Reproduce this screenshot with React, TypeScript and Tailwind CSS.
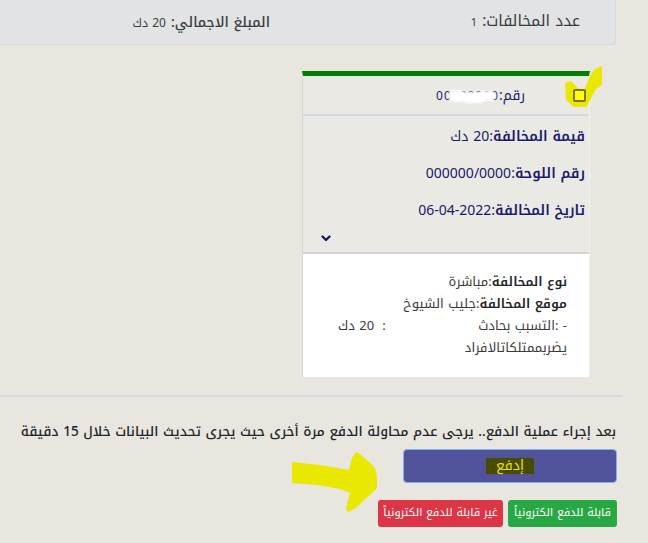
import React from "react";

const F = "font-['Noto_Kufi_Arabic','Noto_Sans_Arabic','DejaVu_Sans',sans-serif]";

function ChevronDown() {
  return (
    <svg width="10" height="7" viewBox="0 0 10 7">
      <path d="M1.5 1.5 L5 5 L8.5 1.5" fill="none" stroke="#1a1a6c" strokeWidth="2.4" strokeLinecap="round" strokeLinejoin="round" />
    </svg>
  );
}

export default function App() {
  return (
    <div dir="rtl" className={`${F} relative w-[648px] h-[543px] overflow-hidden bg-[#e9e6df]`}>
      {/* summary panel */}
      <div className="mr-[32px] w-[616px] h-[45px] bg-[#e2e3e5] border-r border-b border-[#d6d8db] rounded-br-[4px] flex items-center pr-[35px] text-[#383d41]">
        <div className="w-[310px] flex items-baseline">
          <span className="text-[15.5px]">عدد المخالفات:</span>
          <span className="text-[11px] mr-[5px]">1</span>
        </div>
        <div className="flex items-baseline">
          <span className="text-[14px] font-medium">المبلغ الاجمالي:</span>
          <span className="text-[12px] mr-[5px]">20 دك</span>
        </div>
      </div>

      {/* card */}
      <div className="mt-[26px] mr-[58px] w-[288px] border-t-[5px] border-t-[#008000] border-l border-l-[#d9d7d0] border-r border-r-[#f2f1ee] bg-[#ebe9e4]">
        <div className="h-[40px] flex items-center pr-[3px] border-b-2 border-[#d5dae2]">
          <span className="relative z-10 block w-[13px] h-[13px] rounded-[2px] bg-[#ffff00] border-2 border-[#7a7a10]"></span>
          <span className="mr-[48px] flex items-baseline text-[14px] text-[#1a1a6c]">
            <span>رقم:</span>
            <span className="relative text-[12px] tracking-[1px]" dir="ltr">
              00000000
              <span className="absolute left-[12px] top-[3px] w-[18px] h-[12px] rounded-full bg-white blur-[1px]"></span>
              <span className="absolute left-[26px] top-[5px] w-[22px] h-[11px] rounded-full bg-white blur-[1px]"></span>
              <span className="absolute left-[42px] top-[4px] w-[18px] h-[10px] rounded-full bg-white blur-[1px]"></span>
            </span>
          </span>
        </div>
        <div className="pt-[2px] pr-[4px] text-[14px] text-[#1a1a6c]">
          <div className="h-[37px] flex items-center">
            <span className="font-semibold">قيمة المخالفة</span>
            <span>:</span>
            <span className="text-[14px]">20 دك</span>
          </div>
          <div className="h-[37px] flex items-center">
            <span className="font-semibold">رقم اللوحة</span>
            <span>:</span>
            <span className="text-[14px]">000000/0000</span>
          </div>
          <div className="h-[37px] flex items-center">
            <span className="font-semibold">تاريخ المخالفة</span>
            <span>:</span>
            <span className="text-[14px]">06-04-2022</span>
          </div>
          <div className="h-[16px] flex items-center justify-end pl-[18px] pt-[3px]">
            <ChevronDown />
          </div>
          <div className="h-[7px]"></div>
        </div>
        <div className="border-t-2 border-[#d4d4d2] bg-white pt-[17px] pb-[18px] pr-[22px] pl-[35px] text-[13px] leading-[22px] text-[#3a3a3a]">
          <div>
            <span className="font-semibold text-[#212529]">نوع المخالفة</span>
            <span>:مباشرة</span>
          </div>
          <div>
            <span className="font-semibold text-[#212529]">موقع المخالفة</span>
            <span>:جليب الشيوخ</span>
          </div>
          <div className="flex justify-between">
            <span>- :التسبب بحادث</span>
            <span className="flex gap-[8px]">
              <span>:</span>
              <span>20 دك</span>
            </span>
          </div>
          <div>يضربممتلكاتالافراد</div>
        </div>
      </div>

      {/* divider */}
      <div className="mt-[18px] mr-[26px] w-[622px] h-[2px] bg-[#d6dae2]"></div>

      {/* warning */}
      <div className="mt-[23px] mr-[32px] text-[13.5px] leading-[24px] font-medium text-[#212529] whitespace-nowrap">
        بعد إجراء عملية الدفع.. يرجى عدم محاولة الدفع مرة أخرى حيث يجرى تحديث البيانات خلال 15 دقيقة
      </div>

      {/* pay button */}
      <div className="mt-[5px] mr-[31px] w-[214px] h-[34px] rounded-[4px] border border-[#7fb4f2] bg-[#50529a] flex items-center justify-center">
        <span className="bg-[#4a4a00] text-[#e6e600] text-[14px] leading-[16px] px-[10px] py-0">إدفع</span>
      </div>

      {/* status buttons */}
      <div className="mt-[17px] mr-[31px] flex gap-[5px]">
        <div className="w-[109px] h-[27px] rounded-[3px] bg-[#28a745] text-white text-[11px] whitespace-nowrap flex items-center justify-center">
          قابلة للدفع الكترونياً
        </div>
        <div className="w-[125px] h-[27px] rounded-[3px] bg-[#dc3545] text-white text-[11px] whitespace-nowrap flex items-center justify-center">
          غير قابلة للدفع الكترونياً
        </div>
      </div>

      {/* yellow annotations */}
      <svg className="absolute left-0 top-0 pointer-events-none" width="648" height="543" viewBox="0 0 648 543">
        <polygon
          fill="#e8e800"
          points="565,83 571,81 578,88 582,95 586,86 590,76 594,70 601,66 602,66 602,85 597,88 592,96 588,104 586,107 574,107 566,100"
        />
        <polygon
          fill="#e8e800"
          points="292,462 320,465 349,470 352,458 356,452 360,454 368,461 375,468 377,477 377,488 371,494 364,500 356,508 348,512 346,509 348,500 350,493 340,489 318,485 292,483"
        />
      </svg>
    </div>
  );
}
